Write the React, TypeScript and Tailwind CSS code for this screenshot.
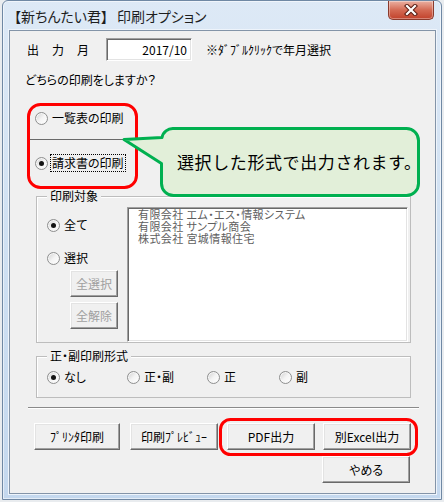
import React from "react";

const FONT = "[font-family:'Noto_Sans_CJK_JP','Noto_Sans',sans-serif]";

function Radio({ checked }: { checked?: boolean }) {
  return (
    <span className="flex h-[13px] w-[13px] shrink-0 items-center justify-center rounded-full border border-[#8e8f8f] bg-linear-to-br from-[#cfcfcf] via-[#f4f4f4] to-white shadow-[inset_0_0_0_1px_#f7f7f7]">
      {checked && <span className="h-[5px] w-[5px] rounded-full bg-[#141414]" />}
    </span>
  );
}

function Btn({ children, className, disabled }: { children: React.ReactNode; className: string; disabled?: boolean }) {
  return (
    <div
      className={
        "flex h-[27px] items-center justify-center border border-t-white border-l-white border-b-[#696969] border-r-[#696969] bg-[#f0f0f0] text-[12px] leading-[14px] shadow-[inset_-1px_-1px_0_#a0a0a0,inset_1px_1px_0_#e3e3e3] [font-feature-settings:'palt'] " +
        (disabled ? "text-[#a0a0a0] " : "text-black ") +
        className
      }
    >
      {children}
    </div>
  );
}

export default function App() {
  return (
    <div className={"relative h-[502px] w-[444px] overflow-hidden bg-[#e9ecef] " + FONT}>
      {/* window */}
      <div className="ml-[2px] flex h-[500px] w-[440px] flex-col rounded-t-[6px] border border-[#6f88a4] bg-linear-to-b from-[#dde9f6] via-[#cfe0f2] to-[#c4d8ee] shadow-[inset_0_0_0_1px_rgba(255,255,255,0.55)]">
        {/* title bar */}
        <div className="flex h-[29px] shrink-0 items-start justify-between">
          <div className="mt-[6px] flex pl-[11px] text-[14px] leading-[18px] text-[#1e1e1e] [font-feature-settings:'palt']">
            <span>【新ちんたい君】</span>
            <span className="ml-[9px]">印刷オプション</span>
          </div>
          <div className="mr-[7px] flex h-[19px] w-[46px] items-center justify-center rounded-b-[5px] border border-t-0 border-[#8a3a2c] bg-linear-to-b from-[#eab0a2] via-[#d46a54] to-[#c1402a] shadow-[inset_0_0_0_1px_rgba(255,255,255,0.35)]">
            <svg width="14" height="12" viewBox="0 0 14 12">
              <path d="M3 2 L11 10 M11 2 L3 10" stroke="#5a1c12" strokeWidth="4.2" strokeLinecap="square" />
              <path d="M3 2 L11 10 M11 2 L3 10" stroke="#ffffff" strokeWidth="2.2" strokeLinecap="square" />
            </svg>
          </div>
        </div>

        {/* client area */}
        <div className="ml-[6px] flex h-[464px] w-[427px] flex-col border border-[#8394a8] bg-[#f0f0f0] shadow-[0_0_0_1px_#eef4fb]">
          {/* month row */}
          <div className="mt-[7px] flex h-[23px] items-center">
            <div className="ml-[17px] flex w-[79px] gap-[13px] text-[12px] leading-[14px] text-black">
              <span>出</span>
              <span>力</span>
              <span>月</span>
            </div>
            <div className="flex h-[23px] w-[86px] items-center justify-end border border-t-[#a0a0a0] border-l-[#a0a0a0] border-b-white border-r-white bg-white pr-[4px] text-[12px] leading-[14px] text-black shadow-[inset_1px_1px_0_#696969,inset_-1px_-1px_0_#e3e3e3]">
              2017/10
            </div>
            <div className="ml-[14px] text-[12px] leading-[14px] text-black [font-feature-settings:'palt']">※ﾀﾞﾌﾞﾙｸﾘｯｸで年月選択</div>
          </div>

          {/* question */}
          <div className="ml-[15px] mt-[12px] text-[12px] leading-[14px] text-black [font-feature-settings:'palt']">どちらの印刷をしますか？</div>

          {/* radio 1 */}
          <div className="ml-[25px] mt-[23px] flex h-[16px] items-center gap-[4px] text-[12px] leading-[14px] text-black [font-feature-settings:'palt']">
            <Radio />
            <span>一覧表の印刷</span>
          </div>

          {/* divider */}
          <div className="ml-[18px] mt-[13px] h-px w-[100px] bg-[#6a6a6a]" />

          {/* radio 2 */}
          <div className="ml-[25px] mt-[14px] flex h-[18px] items-center gap-[2px] text-[12px] leading-[14px] text-black [font-feature-settings:'palt']">
            <Radio checked />
            <span className="border border-dotted border-black px-[1px] py-[1px]">請求書の印刷</span>
          </div>

          {/* group 1 */}
          <div className="relative ml-[26px] mt-[24px] flex h-[147px] w-[375px] border border-[#bdbdbd] shadow-[inset_1px_1px_0_#ffffff]">
            <span className="absolute -top-[8px] left-[10px] bg-[#f0f0f0] px-[3px] text-[12px] leading-[14px] text-black [font-feature-settings:'palt']">印刷対象</span>
            <div className="flex w-[90px] shrink-0 flex-col">
              <div className="ml-[10px] mt-[20px] flex h-[16px] items-center gap-[4px] text-[12px] leading-[14px] text-black">
                <Radio checked />
                <span>全て</span>
              </div>
              <div className="ml-[10px] mt-[17px] flex h-[16px] items-center gap-[4px] text-[12px] leading-[14px] text-black">
                <Radio />
                <span>選択</span>
              </div>
              <Btn className="ml-[33px] mt-[4px] w-[48px]" disabled>全選択</Btn>
              <Btn className="ml-[33px] mt-[5px] w-[48px]" disabled>全解除</Btn>
            </div>
            <div className="mt-[10px] flex h-[135px] w-[281px] flex-col border border-t-[#a0a0a0] border-l-[#a0a0a0] border-b-white border-r-white bg-white pl-[10px] text-[11px] leading-[12px] text-[#5e5e5e] shadow-[inset_1px_1px_0_#696969,inset_-1px_-1px_0_#e3e3e3] [font-feature-settings:'palt']">
              <div className="h-[12px] tracking-[0.4px]">有限会社 エム・エス・情報システム</div>
              <div className="h-[12px] tracking-[0.4px]">有限会社 サンプル商会</div>
              <div className="h-[12px] tracking-[0.4px]">株式会社 宮城情報住宅</div>
            </div>
          </div>

          {/* group 2 */}
          <div className="relative ml-[26px] mt-[13px] flex h-[42px] w-[375px] border border-[#bdbdbd] shadow-[inset_1px_1px_0_#ffffff]">
            <span className="absolute -top-[8px] left-[10px] bg-[#f0f0f0] px-[3px] text-[12px] leading-[14px] text-black [font-feature-settings:'palt']">正・副印刷形式</span>
            <div className="ml-[10px] mt-[12px] flex h-[16px] items-center text-[12px] leading-[14px] text-black [font-feature-settings:'palt']">
              <div className="flex w-[80px] items-center gap-[4px]">
                <Radio checked />
                <span>なし</span>
              </div>
              <div className="flex w-[80px] items-center gap-[4px]">
                <Radio />
                <span>正・副</span>
              </div>
              <div className="flex w-[72px] items-center gap-[4px]">
                <Radio />
                <span>正</span>
              </div>
              <div className="flex items-center gap-[4px]">
                <Radio />
                <span>副</span>
              </div>
            </div>
          </div>

          {/* separator */}
          <div className="ml-[18px] mt-[9px] h-px w-[391px] bg-[#8a8a8a] shadow-[0_1px_0_#ffffff]" />

          {/* buttons */}
          <div className="ml-[24px] mt-[15px] flex">
            <Btn className="w-[86px]">ﾌﾟﾘﾝﾀ印刷</Btn>
            <Btn className="ml-[10px] w-[88px]">印刷ﾌﾟﾚﾋﾞｭｰ</Btn>
            <Btn className="ml-[9px] w-[88px]">PDF出力</Btn>
            <Btn className="ml-[8px] w-[88px]">別Excel出力</Btn>
          </div>
          <div className="ml-[312px] mt-[6px] flex">
            <Btn className="w-[88px]">やめる</Btn>
          </div>
        </div>
      </div>

      {/* annotation overlays */}
      <svg className="pointer-events-none absolute left-0 top-0" width="444" height="502" viewBox="0 0 444 502">
        <rect x="28.5" y="104.5" width="108" height="83" rx="12" fill="none" stroke="#ff0000" strokeWidth="3" />
        <rect x="220.5" y="419.5" width="196" height="35" rx="10" fill="none" stroke="#ff0000" strokeWidth="3" />
        <path
          d="M173.5 128.5 H406.5 A12 12 0 0 1 418.5 140.5 V183.5 A12 12 0 0 1 406.5 195.5 H173.5 A12 12 0 0 1 161.5 183.5 V163.5 L124 139.5 L162 137.5 A11 11 0 0 1 173.5 128.5 Z"
          fill="#e2efd9"
          stroke="#00b050"
          strokeWidth="3"
          strokeLinejoin="round"
        />
      </svg>
      <div className="pointer-events-none absolute left-[177px] top-[151px] text-[17px] leading-[22px] tracking-[0.6px] text-black">選択した形式で出力されます。</div>
    </div>
  );
}
